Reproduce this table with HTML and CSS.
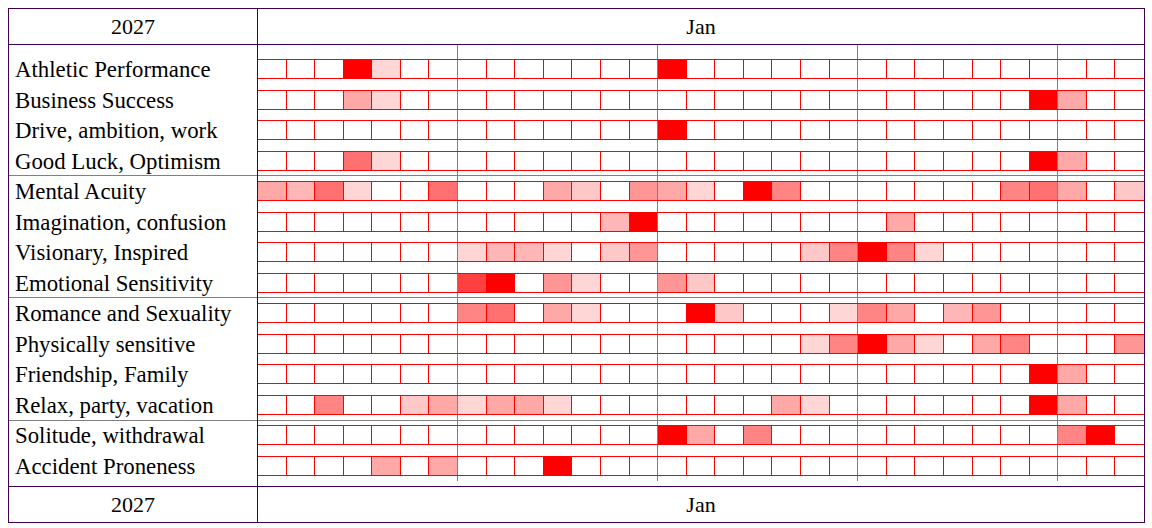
FILE: index.html
```html
<!DOCTYPE html>
<html lang="en">
<head>
<meta charset="utf-8">
<title>2027 Jan</title>
<link rel="stylesheet" href="styles.css">
</head>
<body>
<div class="chart">
  <div class="band">
    <div class="band-year">2027</div>
    <div class="band-month">Jan</div>
  </div>
  <div class="body">
    <div class="labels">
      <div class="group g1">
        <div class="label">Athletic Performance</div>
        <div class="label">Business Success</div>
        <div class="label">Drive, ambition, work</div>
        <div class="label">Good Luck, Optimism</div>
      </div>
      <div class="group g2">
        <div class="label">Mental Acuity</div>
        <div class="label">Imagination, confusion</div>
        <div class="label">Visionary, Inspired</div>
        <div class="label">Emotional Sensitivity</div>
      </div>
      <div class="group g3">
        <div class="label">Romance and Sexuality</div>
        <div class="label">Physically sensitive</div>
        <div class="label">Friendship, Family</div>
        <div class="label">Relax, party, vacation</div>
      </div>
      <div class="group g4">
        <div class="label">Solitude, withdrawal</div>
        <div class="label">Accident Proneness</div>
      </div>
    </div>
    <div class="grid">
      <div class="group g1">
        <div class="cells"><i></i><i></i><i></i><i class="a"></i><i class="i"></i><i></i><i></i><i></i><i></i><i></i><i></i><i></i><i></i><i></i><i class="a"></i><i></i><i></i><i></i><i></i><i></i><i></i><i></i><i></i><i></i><i></i><i></i><i></i><i></i><i></i><i></i><i></i></div>
        <div class="cells"><i></i><i></i><i></i><i class="f"></i><i class="i"></i><i></i><i></i><i></i><i></i><i></i><i></i><i></i><i></i><i></i><i></i><i></i><i></i><i></i><i></i><i></i><i></i><i></i><i></i><i></i><i></i><i></i><i></i><i class="a"></i><i class="f"></i><i></i><i></i></div>
        <div class="cells"><i></i><i></i><i></i><i></i><i></i><i></i><i></i><i></i><i></i><i></i><i></i><i></i><i></i><i></i><i class="a"></i><i></i><i></i><i></i><i></i><i></i><i></i><i></i><i></i><i></i><i></i><i></i><i></i><i></i><i></i><i></i><i></i></div>
        <div class="cells"><i></i><i></i><i></i><i class="c"></i><i class="i"></i><i></i><i></i><i></i><i></i><i></i><i></i><i></i><i></i><i></i><i></i><i></i><i></i><i></i><i></i><i></i><i></i><i></i><i></i><i></i><i></i><i></i><i></i><i class="a"></i><i class="f"></i><i></i><i></i></div>
      </div>
      <div class="group g2">
        <div class="cells"><i class="f"></i><i class="g"></i><i class="c"></i><i class="i"></i><i></i><i></i><i class="c"></i><i></i><i></i><i></i><i class="f"></i><i class="h"></i><i></i><i class="e"></i><i class="f"></i><i class="i"></i><i></i><i class="a"></i><i class="d"></i><i></i><i></i><i></i><i></i><i></i><i></i><i></i><i class="d"></i><i class="c"></i><i class="f"></i><i></i><i class="h"></i></div>
        <div class="cells"><i></i><i></i><i></i><i></i><i></i><i></i><i></i><i></i><i></i><i></i><i></i><i></i><i class="g"></i><i class="a"></i><i></i><i></i><i></i><i></i><i></i><i></i><i></i><i></i><i class="f"></i><i></i><i></i><i></i><i></i><i></i><i></i><i></i><i></i></div>
        <div class="cells"><i></i><i></i><i></i><i></i><i></i><i></i><i></i><i class="i"></i><i class="g"></i><i class="g"></i><i class="i"></i><i></i><i class="h"></i><i class="e"></i><i></i><i></i><i></i><i></i><i></i><i class="h"></i><i class="d"></i><i class="a"></i><i class="d"></i><i class="i"></i><i></i><i></i><i></i><i></i><i></i><i></i><i></i></div>
        <div class="cells"><i></i><i></i><i></i><i></i><i></i><i></i><i></i><i class="b"></i><i class="a"></i><i></i><i class="e"></i><i class="i"></i><i></i><i></i><i class="e"></i><i class="h"></i><i></i><i></i><i></i><i></i><i></i><i></i><i></i><i></i><i></i><i></i><i></i><i></i><i></i><i></i><i></i></div>
      </div>
      <div class="group g3">
        <div class="cells"><i></i><i></i><i></i><i></i><i></i><i></i><i></i><i class="d"></i><i class="c"></i><i></i><i class="f"></i><i class="i"></i><i></i><i></i><i></i><i class="a"></i><i class="h"></i><i></i><i></i><i></i><i class="i"></i><i class="d"></i><i class="f"></i><i></i><i class="g"></i><i class="e"></i><i></i><i></i><i></i><i></i><i></i></div>
        <div class="cells"><i></i><i></i><i></i><i></i><i></i><i></i><i></i><i></i><i></i><i></i><i></i><i></i><i></i><i></i><i></i><i></i><i></i><i></i><i></i><i class="i"></i><i class="d"></i><i class="a"></i><i class="f"></i><i class="i"></i><i></i><i class="f"></i><i class="d"></i><i></i><i></i><i></i><i class="e"></i></div>
        <div class="cells"><i></i><i></i><i></i><i></i><i></i><i></i><i></i><i></i><i></i><i></i><i></i><i></i><i></i><i></i><i></i><i></i><i></i><i></i><i></i><i></i><i></i><i></i><i></i><i></i><i></i><i></i><i></i><i class="a"></i><i class="f"></i><i></i><i></i></div>
        <div class="cells"><i></i><i></i><i class="d"></i><i></i><i></i><i class="h"></i><i class="f"></i><i class="i"></i><i class="f"></i><i class="f"></i><i class="i"></i><i></i><i></i><i></i><i></i><i></i><i></i><i></i><i class="f"></i><i class="i"></i><i></i><i></i><i></i><i></i><i></i><i></i><i></i><i class="a"></i><i class="f"></i><i></i><i></i></div>
      </div>
      <div class="group g4">
        <div class="cells"><i></i><i></i><i></i><i></i><i></i><i></i><i></i><i></i><i></i><i></i><i></i><i></i><i></i><i></i><i class="a"></i><i class="f"></i><i></i><i class="d"></i><i></i><i></i><i></i><i></i><i></i><i></i><i></i><i></i><i></i><i></i><i class="d"></i><i class="a"></i><i></i></div>
        <div class="cells"><i></i><i></i><i></i><i></i><i class="f"></i><i></i><i class="f"></i><i></i><i></i><i></i><i class="a"></i><i></i><i></i><i></i><i></i><i></i><i></i><i></i><i></i><i></i><i></i><i></i><i></i><i></i><i></i><i></i><i></i><i></i><i></i><i></i><i></i></div>
      </div>
    </div>
  </div>
  <div class="band band-foot">
    <div class="band-year">2027</div>
    <div class="band-month">Jan</div>
  </div>
</div>
</body>
</html>
```

FILE: styles.css
```css
html, body {
  background: #ffffff;
  overflow: hidden;
}
body {
  margin: 0;
  font-family: "Liberation Serif", "Times New Roman", serif;
  font-size: 22px;
  color: #000000;
}
.chart {
  box-sizing: border-box;
  width: 1137px;
  margin: 8px 0 0 8px;
  border: 1px solid #400050;
}
.band {
  display: flex;
  height: 36px;
  border-bottom: 1px solid #400050;
  box-sizing: border-box;
}
.band-foot {
  border-bottom: 0;
  border-top: 1px solid #400050;
}
.band-year {
  width: 249px;
  box-sizing: border-box;
  border-right: 1px solid #400050;
  text-align: center;
  line-height: 35px;
}
.band-month {
  flex: 1;
  text-align: center;
  line-height: 35px;
}
.body {
  display: flex;
  height: 441px;
}
.labels {
  width: 249px;
  flex: none;
  box-sizing: border-box;
  border-right: 1px solid #400050;
}
.grid {
  flex: 1;
  min-width: 0;
  background-image: linear-gradient(90deg,
    transparent calc(700% / 31 - 1px), #808080 calc(700% / 31 - 1px), #808080 calc(700% / 31), transparent calc(700% / 31),
    transparent calc(1400% / 31 - 1px), #808080 calc(1400% / 31 - 1px), #808080 calc(1400% / 31), transparent calc(1400% / 31),
    transparent calc(2100% / 31 - 1px), #808080 calc(2100% / 31 - 1px), #808080 calc(2100% / 31), transparent calc(2100% / 31),
    transparent calc(2800% / 31 - 1px), #808080 calc(2800% / 31 - 1px), #808080 calc(2800% / 31), transparent calc(2800% / 31));
  background-size: 100% calc(100% - 5px);
  background-repeat: no-repeat;
}
.group {
  box-sizing: border-box;
  display: flex;
  flex-direction: column;
  gap: 10.667px;
  border-bottom: 1px solid #808080;
}
.g1 { height: 131px; padding-top: 14px; }
.g2 { height: 122px; padding-top: 5px; }
.g3 { height: 123px; padding-top: 5px; }
.g4 { height: 65px; padding-top: 4px; border-bottom: 0; }
.label {
  height: 20px;
  line-height: 22px;
  padding-left: 6px;
  font-size: 22.8px;
  white-space: nowrap;
}
.cells {
  display: grid;
  grid-template-columns: repeat(31, minmax(0, 1fr));
  height: 20px;
  box-sizing: border-box;
  border-top: 1px solid #ff0000;
  border-bottom: 1px solid #ff0000;
}
.cells i {
  display: block;
  border-right: 1px solid #ff0000;
}
.cells i:nth-child(7n) { border-right-color: #808080; }
.cells i:last-child { border-right: 0; }
.cells .a { background: #ff0000; }
.cells .b { background: #ff4040; }
.cells .c { background: #ff7070; }
.cells .d { background: #ff8585; }
.cells .e { background: #ff9696; }
.cells .f { background: #ffa8a8; }
.cells .g { background: #ffb6b6; }
.cells .h { background: #ffc8c8; }
.cells .i { background: #ffd6d6; }
```
